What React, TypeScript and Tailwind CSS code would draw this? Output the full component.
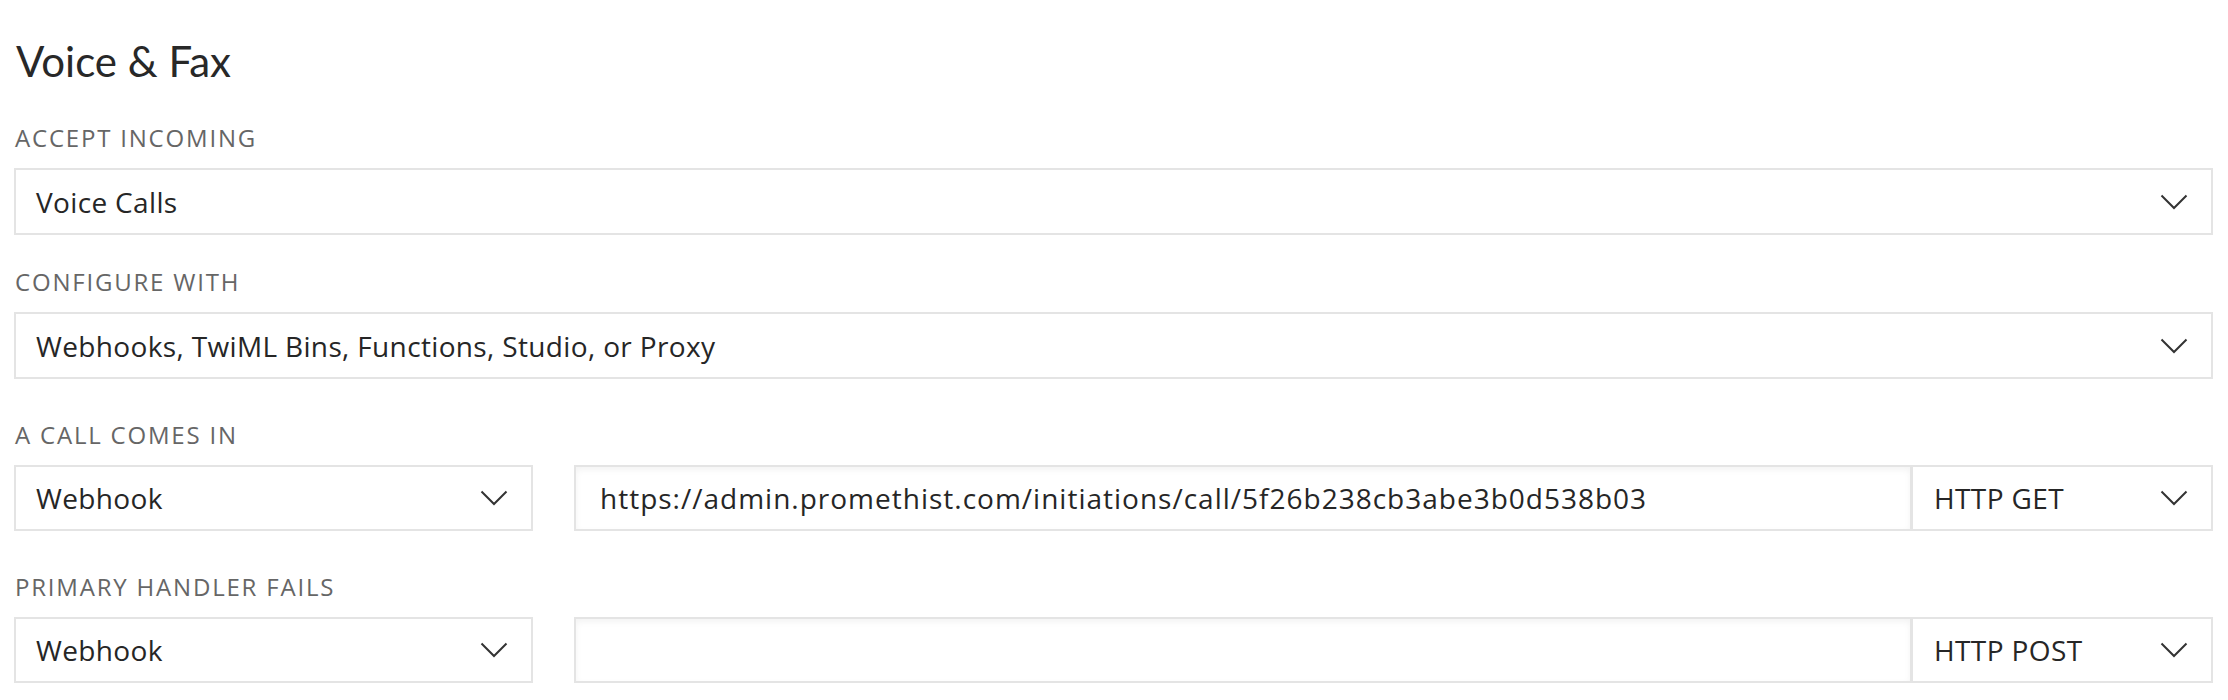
import React from 'react';

function Chevron() {
    return (
        <svg width="28" height="16" viewBox="0 0 28 16" fill="none" className="shrink-0">
            <polyline points="1.5,1.5 14,14 26.5,1.5" stroke="#333333" strokeWidth="2" fill="none" />
        </svg>
    );
}

function Label({ children, className = '' }: { children: React.ReactNode; className?: string }) {
    return (
        <div className={`text-[24px] leading-[28px] tracking-[1.8px] text-[#666666] uppercase pl-px ${className}`}>
            {children}
        </div>
    );
}

function Select({ value, className = '' }: { value: string; className?: string }) {
    return (
        <div className={`flex items-center justify-between bg-white border-2 border-[#e4e4e4] pl-[20px] pr-[23px] ${className}`}>
            <span className="text-[28px] tracking-[0.35px] text-[#262626]">{value}</span>
            <Chevron />
        </div>
    );
}

function HandlerRow({ url, method }: { url: string; method: string }) {
    return (
        <div className="flex h-[66px] mt-[16px]">
            <Select value="Webhook" className="w-[519px] h-full" />
            <div className="ml-[41px] flex-1 flex items-center border-2 border-[#e4e4e4] bg-white pl-[24px] shadow-[inset_0_3px_6px_rgba(0,0,0,0.05)]">
                <span className="text-[28px] tracking-[1px] text-[#262626]">{url}</span>
            </div>
            <div className="w-[301px] flex items-center justify-between bg-white border-y-2 border-r-2 border-l border-[#e4e4e4] pl-[21px] pr-[23px]">
                <span className="text-[28px] tracking-[0.4px] text-[#262626]">{method}</span>
                <Chevron />
            </div>
        </div>
    );
}

export default function App() {
    return (
        <div className="bg-white min-h-screen pl-[14px] pr-[15px] pt-[36px] font-['Open_Sans','Lato',sans-serif]">
            <h1 className="text-[42px] leading-[50px] text-[#282828] font-normal pl-[2px] font-['Lato','Open_Sans',sans-serif]">Voice &amp; Fax</h1>

            <Label className="mt-[38px]">Accept Incoming</Label>
            <Select value="Voice Calls" className="mt-[16px] h-[67px]" />

            <Label className="mt-[33px]">Configure With</Label>
            <Select value="Webhooks, TwiML Bins, Functions, Studio, or Proxy" className="mt-[16px] h-[67px]" />

            <Label className="mt-[42px]">A Call Comes In</Label>
            <HandlerRow url="https://admin.promethist.com/initiations/call/5f26b238cb3abe3b0d538b03" method="HTTP GET" />

            <Label className="mt-[42px]">Primary Handler Fails</Label>
            <HandlerRow url="" method="HTTP POST" />
        </div>
    );
}
